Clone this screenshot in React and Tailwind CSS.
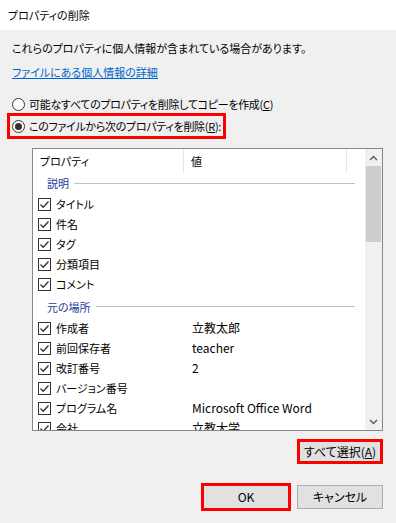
import React from "react";

const Check = () => (
  <div className="w-[13px] h-[13px] border border-[#333333] bg-white flex items-center justify-center shrink-0">
    <svg width="11" height="11" viewBox="0 0 11 11">
      <path d="M1.5 5.5 L4.2 8.2 L9.5 2.5" fill="none" stroke="#333333" strokeWidth="1.3" />
    </svg>
  </div>
);

const Radio = ({ checked }) => (
  <div className="w-[13px] h-[13px] rounded-full border border-[#333333] bg-white flex items-center justify-center shrink-0">
    {checked && <div className="w-[7px] h-[7px] rounded-full bg-[#333333]" />}
  </div>
);

const Group = ({ label, tall }) => (
  <div className={`flex items-center shrink-0 ${tall ? "h-[24px] pt-[1px]" : "h-[21px] pb-[1px]"}`}>
    <span className="pl-[14px] text-[#1a3a9c]">{label}</span>
    <div className="flex-1 h-px bg-[#b4c0dc] ml-[5px] mr-[10px]" />
  </div>
);

const Row = ({ label, value }) => (
  <div className="flex items-center h-[20px] shrink-0">
    <div className="w-[159px] flex items-center pl-[5px] gap-[5px]">
      <Check />
      <span className="whitespace-nowrap">{label}</span>
    </div>
    <span className="whitespace-nowrap text-[12px]">{value}</span>
  </div>
);

export default function App() {
  return (
    <div className="w-[396px] h-[523px] bg-[#f0f0f0] flex flex-col text-[11px] leading-[16px] text-black font-['Noto_Sans_CJK_JP',sans-serif] [font-feature-settings:'palt'] overflow-hidden">
      <div className="h-[30px] bg-white flex items-center pl-[8px] shrink-0">プロパティの削除</div>
      <div className="pl-[12px] mt-[10px] whitespace-nowrap">これらのプロパティに個人情報が含まれている場合があります。</div>
      <div className="pl-[12px] mt-[8px]">
        <span className="text-[#0066cc] underline">ファイルにある個人情報の詳細</span>
      </div>
      <div className="flex items-center mt-[16px] pl-[12px] gap-[4px] h-[16px] whitespace-nowrap">
        <Radio />
        <span className="tracking-[-0.3px]">
          可能なすべてのプロパティを削除してコピーを作成(<span className="underline">C</span>)
        </span>
      </div>
      <div className="ml-[7px] mt-[1px] w-[219px] h-[26px] border-[3px] border-[#ff0000] flex items-center pl-[2px] gap-[4px] whitespace-nowrap shrink-0">
        <Radio checked />
        <span className="tracking-[-0.3px]">
          このファイルから次のプロパティを削除(<span className="underline">R</span>):
        </span>
      </div>
      <div className="ml-[32px] mt-[9px] w-[351px] h-[283px] border border-[#828790] bg-white flex overflow-hidden shrink-0">
        <div className="flex-1 flex flex-col overflow-hidden">
          <div className="h-[24px] flex shrink-0">
            <div className="w-[151px] border-r border-[#e5e5e5] pl-[7px] flex items-center">プロパティ</div>
            <div className="w-[163px] border-r border-[#e5e5e5] pl-[7px] flex items-center">値</div>
          </div>
          <Group label="説明" />
          <Row label="タイトル" />
          <Row label="件名" />
          <Row label="タグ" />
          <Row label="分類項目" />
          <Row label="コメント" />
          <Group label="元の場所" tall />
          <Row label="作成者" value="立教太郎" />
          <Row label="前回保存者" value="teacher" />
          <Row label="改訂番号" value="2" />
          <Row label="バージョン番号" />
          <Row label="プログラム名" value="Microsoft Office Word" />
          <Row label="会社" value="立教大学" />
        </div>
        <div className="w-[17px] bg-[#f0f0f0] flex flex-col shrink-0">
          <div className="h-[17px] flex items-center justify-center shrink-0">
            <svg width="9" height="6" viewBox="0 0 9 6">
              <path d="M1 5 L4.5 1.5 L8 5" fill="none" stroke="#606060" strokeWidth="1.5" />
            </svg>
          </div>
          <div className="h-[76px] mx-[1px] bg-[#cdcdcd] shrink-0" />
          <div className="flex-1" />
          <div className="h-[17px] flex items-center justify-center shrink-0">
            <svg width="9" height="6" viewBox="0 0 9 6">
              <path d="M1 1 L4.5 4.5 L8 1" fill="none" stroke="#606060" strokeWidth="1.5" />
            </svg>
          </div>
        </div>
      </div>
      <div className="flex justify-end mt-[8px] pr-[13px]">
        <div className="w-[86px] h-[25px] border-[3px] border-[#ff0000] bg-[#e1e1e1] flex items-center justify-center whitespace-nowrap text-[12px]">
          すべて選択(<span className="underline">A</span>)
        </div>
      </div>
      <div className="flex justify-end items-center mt-[19px] pr-[13px] gap-[6px] text-[12px]">
        <div className="w-[90px] h-[28px] border-[3px] border-[#ff0000] bg-[#e1e1e1] flex items-center justify-center">
          OK
        </div>
        <div className="w-[86px] h-[24px] border border-[#adadad] bg-[#e1e1e1] flex items-center justify-center">
          キャンセル
        </div>
      </div>
    </div>
  );
}
